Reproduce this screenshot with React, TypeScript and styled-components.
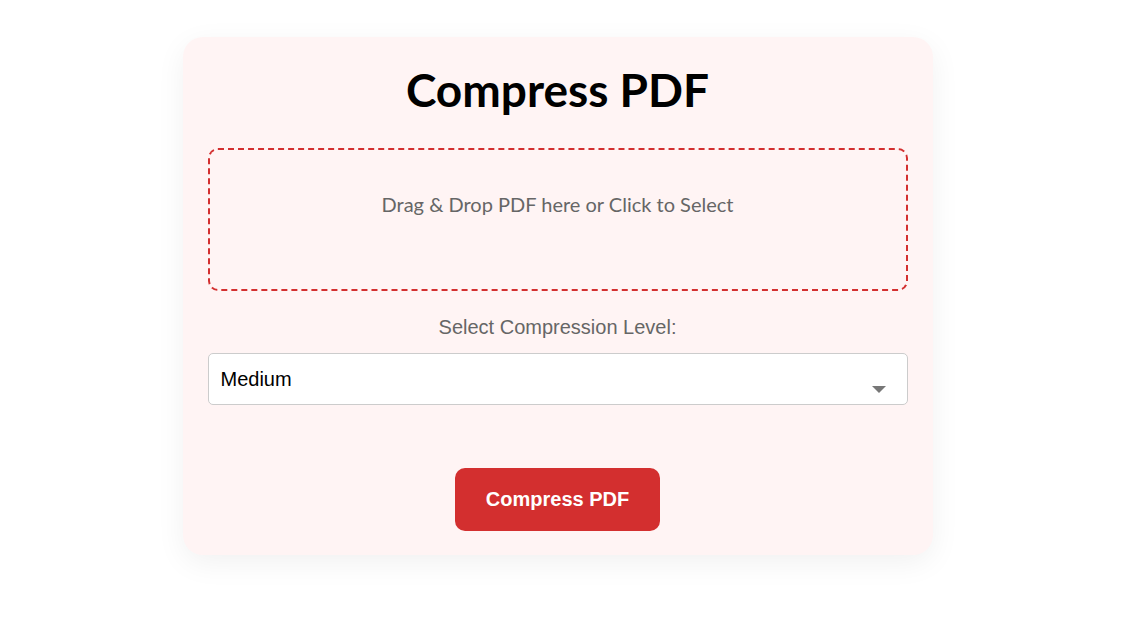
import React from "react";
import styled, { createGlobalStyle } from "styled-components";

const Global = createGlobalStyle`
  html, body { margin: 0; padding: 0; background: #ffffff; }
  body { font-family: "Liberation Sans", Arial, sans-serif; }
`;

const Page = styled.div`
  display: flex;
  justify-content: center;
  padding: 37px 9px 60px 0;
`;

const Card = styled.div`
  width: 750px;
  box-sizing: border-box;
  background: #fff4f4;
  border-radius: 20px;
  box-shadow: 0 8px 30px rgba(0, 0, 0, 0.06);
  padding: 22px 25px 24px;
  display: flex;
  flex-direction: column;
  align-items: stretch;
`;

const Title = styled.h1`
  margin: 0 0 27px;
  text-align: center;
  font-family: Lato, "Noto Sans", sans-serif;
  font-weight: 700;
  font-size: 46px;
  line-height: 62px;
  color: #000;
`;

const DropZone = styled.div`
  height: 143px;
  box-sizing: border-box;
  border: 2px dashed #d32f2f;
  border-radius: 10px;
  padding-top: 42px;
  text-align: center;
  font-family: Lato, "Noto Sans", sans-serif;
  font-size: 20px;
  line-height: 24px;
  color: #666;
  cursor: pointer;
`;

const Label = styled.label`
  display: block;
  margin: 25px 0 14px;
  text-align: center;
  font-size: 20px;
  line-height: 23px;
  color: #666;
`;

const SelectWrap = styled.div`
  position: relative;
`;

const Select = styled.select`
  width: 100%;
  height: 52px;
  box-sizing: border-box;
  appearance: none;
  -webkit-appearance: none;
  border: 1px solid #ccc;
  border-radius: 5px;
  background: #fff;
  padding: 0 12px;
  font-family: "Liberation Sans", Arial, sans-serif;
  font-size: 20px;
  color: #000;
  outline: none;
`;

const Arrow = styled.span`
  position: absolute;
  right: 22px;
  top: 33px;
  width: 0;
  height: 0;
  border-left: 7px solid transparent;
  border-right: 7px solid transparent;
  border-top: 7px solid #777;
  pointer-events: none;
`;

const Button = styled.button`
  align-self: center;
  margin-top: 63px;
  width: 205px;
  height: 63px;
  border: none;
  border-radius: 10px;
  background: #d32f2f;
  color: #fff;
  font-family: "Liberation Sans", Arial, sans-serif;
  font-weight: 700;
  font-size: 20px;
  cursor: pointer;
`;

export default function App() {
  return (
    <>
      <Global />
      <Page>
        <Card>
          <Title>Compress PDF</Title>
          <DropZone>Drag &amp; Drop PDF here or Click to Select</DropZone>
          <Label htmlFor="level">Select Compression Level:</Label>
          <SelectWrap>
            <Select id="level" defaultValue="medium">
              <option value="low">Low</option>
              <option value="medium">Medium</option>
              <option value="high">High</option>
            </Select>
            <Arrow />
          </SelectWrap>
          <Button>Compress PDF</Button>
        </Card>
      </Page>
    </>
  );
}
